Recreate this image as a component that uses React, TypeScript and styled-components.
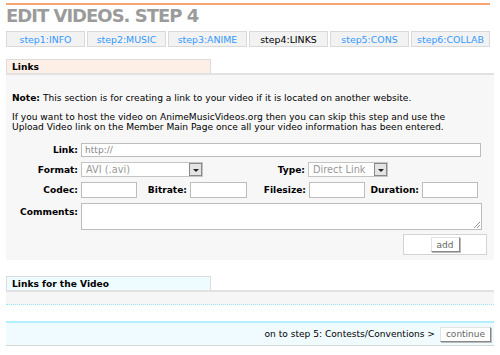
import React from 'react';
import styled, { createGlobalStyle } from 'styled-components';

const GlobalStyle = createGlobalStyle`
  body {
    margin: 0;
    background: #fff;
    font-family: 'DejaVu Sans', Verdana, sans-serif;
    font-size: 9.1px;
    color: #000;
  }
`;

const Page = styled.div`
  width: 488px;
  padding: 3px 0 0 6px;
`;

const TopRule = styled.div`
  width: 484px;
  height: 2px;
  background: #f6a673;
`;

const Title = styled.h1`
  margin: 2px 0 0;
  font-size: 18px;
  line-height: 18px;
  font-weight: bold;
  color: #9b9b9b;
  letter-spacing: -1px;
`;

const Tabs = styled.div`
  display: flex;
  gap: 2px;
  margin-top: 6px;
`;

const Tab = styled.div<{ $active?: boolean }>`
  width: 77px;
  height: 14px;
  border: 1px solid #d9d9d9;
  background: #f2f2f2;
  color: ${(p) => (p.$active ? '#000' : '#3399ff')};
  display: flex;
  align-items: center;
  justify-content: center;
  font-size: 9.4px;
`;

const SectionHead = styled.div<{ $bg: string; $gap: number }>`
  width: 198px;
  height: 13px;
  margin-top: ${(p) => p.$gap}px;
  border: 1px solid #dcdcdc;
  border-bottom: none;
  background: ${(p) => p.$bg};
  font-weight: bold;
  padding-left: 5px;
  display: flex;
  align-items: center;
`;

const Panel = styled.div`
  background: #f7f7f7;
  border-top: 2px solid #e2e2e2;
  padding: 18px 0 5px 6px;
`;

const Para = styled.p`
  margin: 0 0 9px;
  line-height: 10px;
`;

const Form = styled.div`
  display: flex;
  flex-direction: column;
  gap: 5px;
  margin-top: 11px;
`;

const Row = styled.div`
  display: flex;
  align-items: center;
`;

const Label = styled.label<{ $w: number; $top?: boolean }>`
  width: ${(p) => p.$w}px;
  text-align: right;
  font-weight: bold;
  padding-right: 3px;
  box-sizing: border-box;
  align-self: ${(p) => (p.$top ? 'flex-start' : 'center')};
  margin-top: ${(p) => (p.$top ? '4px' : '0')};
`;

const TextBox = styled.div<{ $w: number; $h?: number }>`
  width: ${(p) => p.$w}px;
  height: ${(p) => p.$h ?? 14}px;
  box-sizing: border-box;
  background: #fff;
  border: 1px solid #bdbdbd;
  color: #888;
  padding-left: 3px;
  display: flex;
  align-items: center;
  position: relative;
`;

const Select = styled.div<{ $w: number }>`
  width: ${(p) => p.$w}px;
  height: 15px;
  box-sizing: border-box;
  background: #fff;
  border: 1px solid #c4c4c4;
  color: #999;
  font-size: 9.8px;
  padding-left: 4px;
  display: flex;
  align-items: center;
  justify-content: space-between;
`;

const Arrow = styled.div`
  width: 13px;
  height: 13px;
  box-sizing: border-box;
  border: 1px solid #888;
  background: #e4e4e4;
  display: flex;
  align-items: flex-end;
  justify-content: center;
  padding-bottom: 3px;
  &::after {
    content: '';
    border-left: 3px solid transparent;
    border-right: 3px solid transparent;
    border-top: 3px solid #222;
  }
`;

const Grip = styled.svg`
  position: absolute;
  right: 1px;
  bottom: 1px;
`;

const AddRow = styled.div`
  display: flex;
  justify-content: flex-end;
  padding-right: 7px;
  margin-top: 4px;
`;

const AddBox = styled.div`
  width: 84px;
  height: 21px;
  box-sizing: border-box;
  background: #fff;
  border: 1px solid #d4d4d4;
  display: flex;
  align-items: center;
  justify-content: center;
`;

const Button = styled.button<{ $w: number }>`
  width: ${(p) => p.$w}px;
  height: 15px;
  padding: 0;
  margin: 0;
  font-family: 'DejaVu Sans', Verdana, sans-serif;
  font-size: 9px;
  color: #666;
  background: #fff;
  border: 1px solid #e2e2e2;
  border-right-color: #888;
  border-bottom-color: #888;
  box-shadow: 1px 1px 0 #bbb;
`;

const Strip = styled.div`
  height: 12px;
  background: #f6f6f6;
  border-top: 2px solid #e2e2e2;
  border-bottom: 1px dotted #9be7f7;
`;

const NextBar = styled.div`
  margin-top: 16px;
  height: 22px;
  background: #f0fbff;
  border-top: 2px solid #b3effc;
  border-bottom: 1px solid #d6d6d6;
  display: flex;
  align-items: center;
  justify-content: flex-end;
  gap: 5px;
  padding-right: 3px;
`;

const tabs = ['step1:INFO', 'step2:MUSIC', 'step3:ANIME', 'step4:LINKS', 'step5:CONS', 'step6:COLLAB'];

export default function App() {
  return (
    <>
      <GlobalStyle />
      <Page>
        <TopRule />
        <Title>EDIT VIDEOS. STEP 4</Title>
        <Tabs>
          {tabs.map((t) => (
            <Tab key={t} $active={t === 'step4:LINKS'}>
              {t}
            </Tab>
          ))}
        </Tabs>

        <SectionHead $bg="#fdeee6" $gap={12}>
          Links
        </SectionHead>
        <Panel>
          <Para>
            <b>Note:</b> This section is for creating a link to your video if it is located on another website.
          </Para>
          <Para>
            If you want to host the video on AnimeMusicVideos.org then you can skip this step and use the
            <br />
            Upload Video link on the Member Main Page once all your video information has been entered.
          </Para>
          <Form>
            <Row>
              <Label $w={69}>Link:</Label>
              <TextBox $w={400}>http://</TextBox>
            </Row>
            <Row>
              <Label $w={69}>Format:</Label>
              <Select $w={122}>
                AVI (.avi)
                <Arrow />
              </Select>
              <Label $w={105}>Type:</Label>
              <Select $w={80}>
                Direct Link
                <Arrow />
              </Select>
            </Row>
            <Row>
              <Label $w={69}>Codec:</Label>
              <TextBox $w={56} $h={16} />
              <Label $w={53}>Bitrate:</Label>
              <TextBox $w={57} $h={16} />
              <Label $w={62}>Filesize:</Label>
              <TextBox $w={56} $h={16} />
              <Label $w={57}>Duration:</Label>
              <TextBox $w={56} $h={16} />
            </Row>
            <Row>
              <Label $w={69} $top>
                Comments:
              </Label>
              <TextBox $w={401} $h={27}>
                <Grip width="6" height="6" viewBox="0 0 6 6">
                  <path d="M6 0L0 6M6 3L3 6" stroke="#999" strokeWidth="1" />
                </Grip>
              </TextBox>
            </Row>
          </Form>
          <AddRow>
            <AddBox>
              <Button $w={29}>add</Button>
            </AddBox>
          </AddRow>
        </Panel>

        <SectionHead $bg="#eefbff" $gap={16}>
          Links for the Video
        </SectionHead>
        <Strip />
        <NextBar>
          on to step 5: Contests/Conventions &gt;
          <Button $w={51}>continue</Button>
        </NextBar>
      </Page>
    </>
  );
}
